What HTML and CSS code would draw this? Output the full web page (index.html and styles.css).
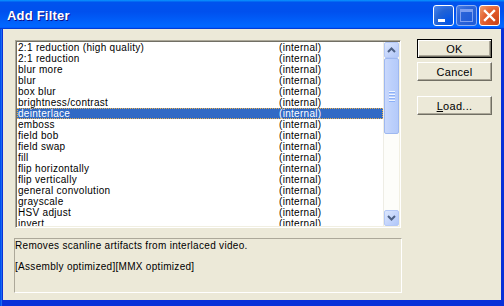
FILE: index.html
```html
<!DOCTYPE html>
<html>
<head>
<meta charset="utf-8">
<link rel="stylesheet" href="styles.css">
</head>
<body>
<div class="window">
  <div class="titlebar">
    <span class="title">Add Filter</span>
    <div class="controls">
      <div class="tbtn min"><span class="min-bar"></span></div>
      <div class="tbtn max"><span class="max-box"></span></div>
      <div class="tbtn close">
        <svg width="13" height="13" viewBox="0 0 13 13"><path d="M2 2 L11 11 M11 2 L2 11" stroke="#fff" stroke-width="2.4" stroke-linecap="square"/></svg>
      </div>
    </div>
  </div>
  <div class="client">
    <div class="main">
      <div class="listbox">
        <div class="rows">
          <div class="row"><span class="name">2:1 reduction (high quality)</span><span>(internal)</span></div>
          <div class="row"><span class="name">2:1 reduction</span><span>(internal)</span></div>
          <div class="row"><span class="name">blur more</span><span>(internal)</span></div>
          <div class="row"><span class="name">blur</span><span>(internal)</span></div>
          <div class="row"><span class="name">box blur</span><span>(internal)</span></div>
          <div class="row"><span class="name">brightness/contrast</span><span>(internal)</span></div>
          <div class="row selected"><span class="name">deinterlace</span><span>(internal)</span></div>
          <div class="row"><span class="name">emboss</span><span>(internal)</span></div>
          <div class="row"><span class="name">field bob</span><span>(internal)</span></div>
          <div class="row"><span class="name">field swap</span><span>(internal)</span></div>
          <div class="row"><span class="name">fill</span><span>(internal)</span></div>
          <div class="row"><span class="name">flip horizontally</span><span>(internal)</span></div>
          <div class="row"><span class="name">flip vertically</span><span>(internal)</span></div>
          <div class="row"><span class="name">general convolution</span><span>(internal)</span></div>
          <div class="row"><span class="name">grayscale</span><span>(internal)</span></div>
          <div class="row"><span class="name">HSV adjust</span><span>(internal)</span></div>
          <div class="row"><span class="name">invert</span><span>(internal)</span></div>
        </div>
        <div class="scrollbar">
          <div class="sbtn">
            <svg width="9" height="6" viewBox="0 0 9 6"><path d="M1 5 L4.5 1.5 L8 5" fill="none" stroke="#4d6185" stroke-width="2"/></svg>
          </div>
          <div class="thumb">
            <span class="grip"></span><span class="grip"></span><span class="grip"></span><span class="grip"></span>
          </div>
          <div class="track"></div>
          <div class="sbtn">
            <svg width="9" height="6" viewBox="0 0 9 6"><path d="M1 1 L4.5 4.5 L8 1" fill="none" stroke="#4d6185" stroke-width="2"/></svg>
          </div>
        </div>
      </div>
      <div class="desc">
        <div class="line">Removes scanline artifacts from interlaced video.</div>
        <div class="line gap">[Assembly optimized][MMX optimized]</div>
      </div>
    </div>
    <div class="buttons">
      <div class="btn default"><span>OK</span></div>
      <div class="btn cancel"><span>Cancel</span></div>
      <div class="btn load"><span><u>L</u>oad...</span></div>
    </div>
  </div>
</div>
</body>
</html>
```
FILE: styles.css
```css
html, body {
  margin: 0;
  padding: 0;
  background: #ece9d8;
}
.window {
  width: 504px;
  height: 306px;
  background: #0831d9;
  box-shadow: inset 1px 0 #0050ee, inset 2px 0 #1a6af0;
  display: flex;
  flex-direction: column;
  overflow: hidden;
}
.titlebar {
  height: 29px;
  flex: none;
  background: linear-gradient(180deg, #0997ff, #0053ee 8%, #0050ee 40%, #0066ff 88%, #0066ff 93%, #005bff 95%, #003dd7 96%, #003dd7);
  display: flex;
  align-items: center;
  justify-content: space-between;
  padding: 0 4px 0 7px;
}
.title {
  font-family: "Liberation Sans", Arial, sans-serif;
  font-weight: bold;
  font-size: 13px;
  color: #fff;
  text-shadow: 1px 1px #0f1089;
  margin-top: 2px;
  letter-spacing: 0.2px;
}
.controls {
  display: flex;
  gap: 2px;
  margin-top: 2px;
}
.tbtn {
  width: 19px;
  height: 19px;
  border: 1px solid #fff;
  border-radius: 3px;
  position: relative;
  display: flex;
  align-items: center;
  justify-content: center;
}
.min {
  background: radial-gradient(circle at 80% 80%, #0054e9 0%, #2263d5 55%, #4d88f0 100%);
}
.min-bar {
  position: absolute;
  left: 4px;
  top: 13px;
  width: 7px;
  height: 3px;
  background: #fff;
}
.max {
  background: radial-gradient(circle at 80% 80%, #1e5ad8 0%, #2a63d8 60%, #4a7fe6 100%);
  border-color: #8fb0f2;
}
.max-box {
  width: 11px;
  height: 9px;
  border: 1px solid #7d9ff0;
  border-top-width: 3px;
}
.close {
  background: radial-gradient(circle at 90% 90%, #cc4419 0%, #e25c2c 55%, #f0a070 100%);
}
.client {
  flex: none;
  height: 271px;
  margin: 0 3px;
  background: #ece9d8;
  display: flex;
  padding: 10px 0 0 11px;
  box-sizing: border-box;
  font-family: "Liberation Sans", Arial, sans-serif;
  font-size: 10px;
  letter-spacing: 0.3px;
  color: #000;
}
.main {
  width: 388px;
  margin-top: 1px;
  display: flex;
  flex-direction: column;
}
.listbox {
  margin-left: 1px;
  width: 386px;
  height: 188px;
  box-sizing: border-box;
  border: 1px solid;
  border-color: #aca899 #fff #fff #aca899;
  box-shadow: inset 1px 1px #716f64, inset -1px -1px #f1efe2;
  padding: 1px;
  display: flex;
  background: #fff;
}
.rows {
  flex: 1;
  overflow: hidden;
  background: #fff;
}
.row {
  height: 11px;
  line-height: 11px;
  display: flex;
  padding-left: 1px;
  white-space: nowrap;
}
.row .name {
  width: 261px;
  flex: none;
}
.row.selected {
  background: #316ac5;
  color: #fff;
  outline: 1px dotted #e8b050;
  outline-offset: -1px;
}
.scrollbar {
  width: 16px;
  flex: none;
  display: flex;
  flex-direction: column;
  background: #fdfdfa;
  border-left: 1px solid #eeede5;
  box-sizing: border-box;
}
.sbtn {
  height: 16px;
  flex: none;
  box-sizing: border-box;
  border: 1px solid #b4c8f6;
  border-radius: 2px;
  background: linear-gradient(135deg, #dce7fd, #c2d3fb 60%, #b0c7f8);
  display: flex;
  align-items: center;
  justify-content: center;
}
.thumb {
  height: 76px;
  flex: none;
  box-sizing: border-box;
  border: 1px solid #9eb8f0;
  border-radius: 2px;
  background: linear-gradient(90deg, #c9d8fc, #bcd0fb 50%, #b4cafa);
  display: flex;
  flex-direction: column;
  align-items: center;
  justify-content: center;
  gap: 1px;
}
.grip {
  width: 6px;
  height: 1px;
  background: #eef4fe;
  border-bottom: 1px solid #8cb0f8;
}
.track {
  flex: 1;
}
.desc {
  margin-top: 10px;
  height: 55px;
  box-sizing: border-box;
  border: 1px solid;
  border-color: #aca899 #fff #fff #aca899;
  padding-top: 1px;
}
.line {
  height: 11px;
  line-height: 11px;
  white-space: nowrap;
}
.line.gap {
  margin-top: 10px;
}
.buttons {
  margin-left: 15px;
  width: 75px;
  display: flex;
  flex-direction: column;
}
.btn {
  height: 19px;
  box-sizing: border-box;
  border: 1px solid;
  border-color: #fff #716f64 #716f64 #fff;
  box-shadow: inset -1px -1px #aca899;
  display: flex;
  align-items: center;
  justify-content: center;
  background: #ece9d8;
  font-size: 11px;
}
.btn.default {
  border: 1px solid #000;
  box-shadow: inset 1px 1px #fff, inset -1px -1px #716f64, inset -2px -2px #aca899;
}
.btn.cancel {
  margin-top: 4px;
}
.btn.load {
  margin-top: 15px;
}
```
